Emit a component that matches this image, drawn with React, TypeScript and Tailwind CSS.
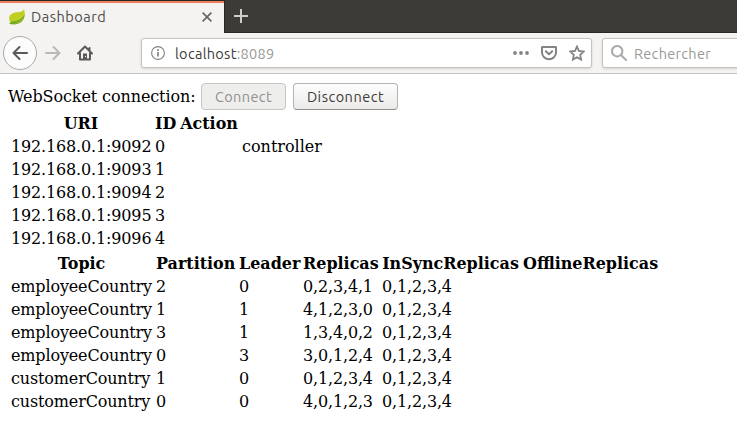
import type { ReactNode } from 'react';

const brokers = [
  ['192.168.0.1:9092', '0', '', 'controller'],
  ['192.168.0.1:9093', '1', '', ''],
  ['192.168.0.1:9094', '2', '', ''],
  ['192.168.0.1:9095', '3', '', ''],
  ['192.168.0.1:9096', '4', '', ''],
];

const topics = [
  ['employeeCountry', '2', '0', '0,2,3,4,1', '0,1,2,3,4', ''],
  ['employeeCountry', '1', '1', '4,1,2,3,0', '0,1,2,3,4', ''],
  ['employeeCountry', '3', '1', '1,3,4,0,2', '0,1,2,3,4', ''],
  ['employeeCountry', '0', '3', '3,0,1,2,4', '0,1,2,3,4', ''],
  ['customerCountry', '1', '0', '0,1,2,3,4', '0,1,2,3,4', ''],
  ['customerCountry', '0', '0', '4,0,1,2,3', '0,1,2,3,4', ''],
];

function Table({ cols, heads, rows, className }: { cols: string[]; heads: string[]; rows: string[][]; className: string }) {
  return (
    <table className={`table-fixed border-separate border-spacing-[2px] ${className}`}>
      <colgroup>
        {cols.map((c, i) => <col key={i} className={c} />)}
      </colgroup>
      <thead>
        <tr>
          {heads.map((h, i) => <th key={i} className="h-[21px] whitespace-nowrap p-px text-center text-[15.95px] font-bold">{h}</th>)}
        </tr>
      </thead>
      <tbody>
        {rows.map((r, i) => (
          <tr key={i}>
            {r.map((v, j) => <td key={j} className={`h-[21px] whitespace-nowrap p-px ${v === 'controller' ? '' : 'tracking-[-0.15px]'}`}>{v}</td>)}
          </tr>
        ))}
      </tbody>
    </table>
  );
}

function Icon({ children, className }: { children: ReactNode; className: string }) {
  return (
    <svg viewBox="0 0 16 16" className={`size-4 shrink-0 ${className}`} fill="none" stroke="currentColor" strokeWidth="2" strokeLinecap="round" strokeLinejoin="round">
      {children}
    </svg>
  );
}

function TabStrip() {
  return (
    <div className="flex h-[33px] border-b border-[#282724] bg-[#3c3b37]">
      <div className="flex h-[33px] w-[224px] shrink-0 flex-col border-t border-[#282724] bg-[#f4f3f2]">
        <div className="h-[2px] bg-[#ee7f58]" />
        <div className="flex h-[28px] items-center pl-[9px] pr-[12px]">
          <svg viewBox="0 0 16 16" className="size-4 shrink-0">
            <path d="M15 .2C13.500 2.700 11.500 2.900 8 3.300 3.300 3.800.2 5.500.2 9.600c0 1.600.5 2.900 1.400 3.800L.3 14.700c4.200 1.200 9.700.7 12.700-2.500C16 9 16.400 4.300 15 .2Z" fill="#bfcf22" />
            <path d="M.3 14.700c4.200 1.200 9.700.7 12.700-2.500 1.700-1.800 2.600-4.200 2.700-6.600-2.600 4.800-7.700 6.900-13.700 7.100Z" fill="#72a82c" />
            <path d="M5 14.100c4.300-.2 7.600-1.900 9.600-5.300-.9 3.700-4.300 6.100-9.600 5.300Z" fill="#b6ca2c" />
          </svg>
          <span className="ml-[6px] grow text-[14.5px] leading-5 tracking-[0.5px] text-[#4c4b48]">Dashboard</span>
          <svg viewBox="0 0 10 10" className="size-[10px] text-[#656462]" fill="none" stroke="currentColor" strokeWidth="1.6">
            <path d="m.6.6 8.800 8.800M9.400.6.6 9.400" />
          </svg>
        </div>
      </div>
      <div className="flex w-[33px] items-center justify-center border-l border-[#282724] text-[#d0ccc7]">
        <svg viewBox="0 0 14 14" className="size-[14px]" fill="none" stroke="currentColor" strokeWidth="2"><path d="M7 0v14M0 7h14" /></svg>
      </div>
    </div>
  );
}

function Toolbar() {
  return (
    <div className="flex h-[41px] overflow-hidden border-b border-[#c5c2bf] bg-[#f4f3f2]">
      <div className="flex h-[40px] w-[141px] shrink-0 items-center pl-[3px]">
        <div className="flex size-[34px] items-center justify-center rounded-full border border-[#aaa9a7] bg-[#fcfcfc]">
          <Icon className="text-[#5b5a59]"><path d="M15 8H1.500M7.500 2 1.500 8l6 6" /></Icon>
        </div>
        <Icon className="ml-2 text-[#bbb9b7]"><path d="M1 8h13.500M8.500 2l6 6-6 6" /></Icon>
        <Icon className="ml-4 text-[#5b5a59]">
          <path d="M1 8.500 8 1.500l7 7M3 8v6.500h10V8M12.500 3v3" />
          <path d="M6 8.500h4V14H6z" fill="currentColor" stroke="none" />
          <path d="M8 11h1v1H8z" fill="#f4f3f2" stroke="none" />
        </Icon>
      </div>
      <div className="mt-[5px] flex h-[30px] w-[451px] shrink-0 items-center rounded-[3px] border border-[#c5c1bd] bg-white shadow-sm">
        <svg viewBox="0 0 14 14" className="ml-[9px] size-[14px] shrink-0 text-[#858482]" fill="none" stroke="currentColor">
          <circle cx="7" cy="7" r="6.400" strokeWidth="1.100" />
          <path d="M7 6v4.500M7 3.300v1.600" strokeWidth="1.700" />
        </svg>
        <span className="ml-[10px] grow pt-px text-[14.5px] leading-5 tracking-[0.3px] text-[#9a9996]"><span className="text-[#3c3b38]">localhost</span>:8089</span>
        <Icon className="text-[#858482]">
          <g fill="currentColor" stroke="none"><circle cx="2" cy="8" r="1.900" /><circle cx="8" cy="8" r="1.900" /><circle cx="14" cy="8" r="1.900" /></g>
        </Icon>
        <Icon className="ml-3 text-[#858482]">
          <path d="M1.300 2h13.400q.3 0 .3.300V7.500a7 6.700 0 0 1-14 0V2.300Q1 2 1.300 2ZM4.800 6.300 8 9.300l3.200-3" />
        </Icon>
        <Icon className="ml-3 mr-[6px] text-[#858482]">
          <path d="m8 1.500 1.900 4.400 4.900.6-3.600 3.300.9 4.800L8 12.200l-4.100 2.400.9-4.800-3.600-3.300 4.900-.6Z" strokeWidth="1.800" strokeLinejoin="miter" />
        </Icon>
      </div>
      <div className="ml-[10px] mt-[5px] flex h-[30px] w-[160px] shrink-0 items-center rounded-[3px] border border-[#c5c1bd] bg-white shadow-sm">
        <Icon className="ml-2 text-[#aaa8a6]"><circle cx="6.200" cy="6.200" r="5.200" /><path d="m10.200 10.200 4.900 4.900" /></Icon>
        <span className="ml-[7px] pt-px text-[14.5px] leading-5 tracking-[0.3px] text-[#9a9996]">Rechercher</span>
      </div>
    </div>
  );
}

export default function App() {
  return (
    <div className="h-[437px] w-[737px] overflow-hidden bg-white font-['Ubuntu','Noto_Sans',sans-serif]">
      <TabStrip />
      <Toolbar />
      <main className="pl-2 pt-[9px] font-['DejaVu_Serif',serif] text-[16px] leading-[19px] text-black">
        <div className="flex h-[28px]">
          <span className="mt-1 w-[193px] shrink-0 whitespace-nowrap tracking-[-0.1px]">WebSocket connection:</span>
          <button disabled className="h-[27px] w-[85px] rounded-[4px] border border-[#c7c5c3] bg-[#eeeeed] font-['Ubuntu','Noto_Sans',sans-serif] text-[14.5px] leading-5 tracking-[0.4px] text-[#91908e]">Connect</button>
          <button className="ml-[7px] h-[27px] w-[105px] rounded-[4px] border border-[#b5b2af] border-b-[#92908d] bg-linear-to-b from-[#fdfdfd] to-[#ecebea] font-['Ubuntu','Noto_Sans',sans-serif] text-[14.5px] leading-5 tracking-[0.5px] text-[#3c3b38]">Disconnect</button>
        </div>
        <Table className="w-[317px]" cols={['w-[142px]', 'w-[23px]', 'w-[60px]', 'w-[82px]']} heads={['URI', 'ID', 'Action', '']} rows={brokers} />
        <Table className="w-[653px]" cols={['w-[143px]', 'w-[81px]', 'w-[62px]', 'w-[77px]', 'w-[139px]', 'w-[137px]']} heads={['Topic', 'Partition', 'Leader', 'Replicas', 'InSyncReplicas', 'OfflineReplicas']} rows={topics} />
      </main>
    </div>
  );
}
